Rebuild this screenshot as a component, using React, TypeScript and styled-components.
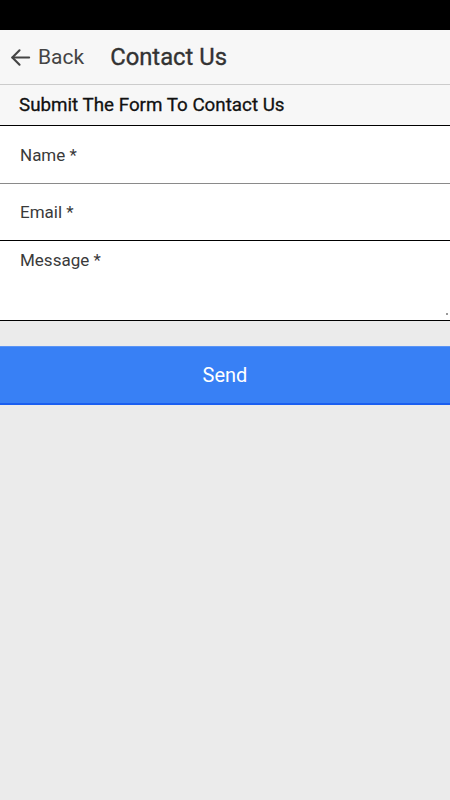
import React from "react";
import styled, { createGlobalStyle } from "styled-components";

const Global = createGlobalStyle`
  html, body { margin: 0; padding: 0; background: #ebebeb; }
  body { font-family: Roboto, "Noto Sans", Arial, sans-serif; }
  * { box-sizing: border-box; }
`;

const Screen = styled.div`
  width: 450px;
  min-height: 800px;
  background: #ebebeb;
  display: flex;
  flex-direction: column;
`;

const StatusBar = styled.div`
  height: 30px;
  background: #000;
`;

const Header = styled.header`
  height: 55px;
  background: #f7f7f7;
  border-bottom: 1px solid #cccccc;
  display: flex;
  align-items: center;
  padding-left: 9px;
`;

const BackButton = styled.button`
  display: flex;
  align-items: center;
  gap: 6px;
  background: none;
  border: none;
  padding: 0;
  font-family: inherit;
  font-size: 21px;
  color: #444;
  cursor: pointer;
`;

const Title = styled.h1`
  margin: 0 0 0 26px;
  font-size: 23.8px;
  font-weight: 400;
  -webkit-text-stroke: 0.35px #333;
  color: #333;
`;

const SubHeader = styled.div`
  height: 41px;
  background: #f7f7f7;
  border-bottom: 1px solid #000;
  display: flex;
  align-items: center;
  padding-left: 19px;
  font-size: 18.8px;
  font-weight: 400;
  -webkit-text-stroke: 0.3px #111;
  color: #111;
`;

const Field = styled.label<{ $height: number; $border: string; $top?: boolean }>`
  display: flex;
  align-items: ${(p) => (p.$top ? "flex-start" : "center")};
  height: ${(p) => p.$height}px;
  background: #fff;
  border-bottom: 1px solid ${(p) => p.$border};
  padding: ${(p) => (p.$top ? "9px 20px 0" : "0 20px")};
  font-size: 17px;
  color: #3a3a3a;
  position: relative;
`;

const Grip = styled.span`
  position: absolute;
  right: 2px;
  bottom: 5px;
  width: 2px;
  height: 2px;
  background: #999;
`;

const Spacer = styled.div`
  height: 25px;
`;

const SendButton = styled.button`
  height: 59px;
  width: 100%;
  background: #3880f5;
  border: none;
  border-top: 1px solid #5b94f5;
  border-bottom: 2px solid #1a5ff0;
  color: #fff;
  font-family: inherit;
  font-size: 20px;
  cursor: pointer;
`;

export default function App() {
  return (
    <Screen>
      <Global />
      <StatusBar />
      <Header>
        <BackButton>
          <svg width="23" height="23" viewBox="0 0 24 24" fill="none" stroke="#444" strokeWidth="2.2" strokeLinecap="round" strokeLinejoin="round">
            <path d="M21 12H3.5" />
            <path d="M11 4.5L3.5 12l7.5 7.5" />
          </svg>
          Back
        </BackButton>
        <Title>Contact Us</Title>
      </Header>
      <SubHeader>Submit The Form To Contact Us</SubHeader>
      <Field $height={58} $border="#8a8a8a">Name *</Field>
      <Field $height={57} $border="#000">Email *</Field>
      <Field $height={80} $border="#000" $top>
        Message *
        <Grip />
      </Field>
      <Spacer />
      <SendButton>Send</SendButton>
    </Screen>
  );
}
